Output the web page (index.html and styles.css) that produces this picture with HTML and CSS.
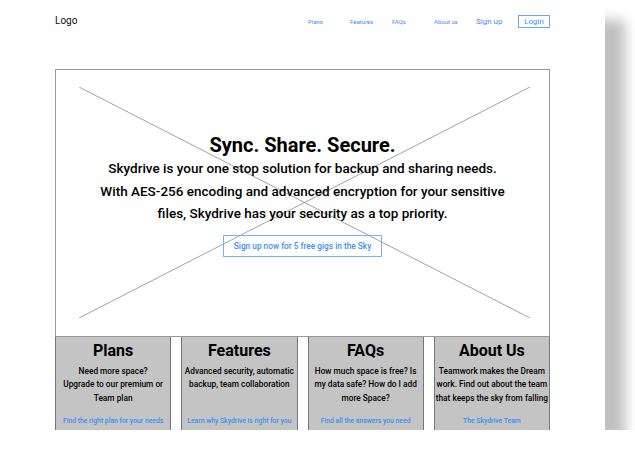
FILE: index.html
```html
<!DOCTYPE html>
<html lang="en">
<head>
<meta charset="utf-8">
<title>Skydrive</title>
<link rel="stylesheet" href="styles.css">
</head>
<body>
<div class="page">
  <header class="topbar">
    <div class="logo">Logo</div>
    <nav class="nav">
      <a class="nav-link">Plans</a>
      <a class="nav-link">Features</a>
      <a class="nav-link">FAQs</a>
      <a class="nav-link">About us</a>
      <a class="nav-signup">Sign up</a>
      <a class="nav-login">Login</a>
    </nav>
  </header>
  <main class="content">
    <section class="hero">
      <svg class="hero-x" preserveAspectRatio="none">
        <line x1="0" y1="0" x2="100%" y2="100%"></line>
        <line x1="100%" y1="0" x2="0" y2="100%"></line>
      </svg>
      <h1 class="hero-title">Sync. Share. Secure.</h1>
      <p class="hero-text">Skydrive is your one stop solution for backup and sharing needs. With AES-256 encoding and advanced encryption for your sensitive files, Skydrive has your security as a top priority.</p>
      <a class="cta">Sign up now for 5 free gigs in the Sky</a>
    </section>
    <section class="cards">
      <div class="card">
        <h2 class="card-title">Plans</h2>
        <p class="card-text">Need more space?<br>Upgrade to our premium or Team plan</p>
        <a class="card-link">Find the right plan for your needs</a>
      </div>
      <div class="card">
        <h2 class="card-title">Features</h2>
        <p class="card-text">Advanced security, automatic backup, team collaboration</p>
        <a class="card-link">Learn why Skydrive is right for you</a>
      </div>
      <div class="card">
        <h2 class="card-title">FAQs</h2>
        <p class="card-text">How much space is free? Is my data safe? How do I add more Space?</p>
        <a class="card-link">Find all the answers you need</a>
      </div>
      <div class="card">
        <h2 class="card-title">About Us</h2>
        <p class="card-text">Teamwork makes the Dream work. Find out about the team that keeps the sky from falling</p>
        <a class="card-link">The Skydrive Team</a>
      </div>
    </section>
  </main>
</div>
</body>
</html>
```
FILE: styles.css
```css
* { box-sizing: border-box; }

body {
  margin: 0;
  background: #fff;
  font-family: Roboto, "Liberation Sans", sans-serif;
  color: #000;
}

.page {
  width: 605px;
  height: 430px;
  overflow: hidden;
  background: #fff;
  box-shadow: 20px 20px 12px rgba(0, 0, 0, 0.25);
}

.topbar {
  display: flex;
  justify-content: space-between;
  align-items: baseline;
  padding: 15px 55px 0 55px;
}

.logo {
  font-size: 10px;
  line-height: 12px;
  color: #111;
}

.nav {
  display: grid;
  grid-template-columns: repeat(6, 32px);
  column-gap: 10px;
  align-items: baseline;
}

.nav-link {
  font-size: 6px;
  color: #3f8ef0;
  white-space: nowrap;
}

.nav-signup {
  font-size: 8px;
  color: #3f8ef0;
  white-space: nowrap;
}

.nav-login {
  height: 13px;
  border: 1px solid #6aa7f2;
  font-size: 8px;
  line-height: 11px;
  text-align: center;
  color: #3f8ef0;
}

.content {
  padding: 0 55px;
  margin-top: 41px;
}

.hero {
  position: relative;
  isolation: isolate;
  height: 268px;
  border: 1px solid #999;
  display: flex;
  flex-direction: column;
  align-items: center;
  padding-top: 63px;
}

.hero-x {
  position: absolute;
  top: 17px;
  left: 23px;
  width: 451px;
  height: 231px;
  z-index: -1;
}

.hero-x line {
  stroke: #8a8a8a;
  stroke-width: 0.8;
}

.hero-title {
  margin: 0;
  font-size: 20px;
  line-height: 24px;
  font-weight: 700;
}

.hero-text {
  margin: 0;
  max-width: 412px;
  font-size: 13.5px;
  line-height: 22.5px;
  font-weight: 500;
  text-align: center;
}

.cta {
  margin-top: 10px;
  height: 22px;
  padding: 0 10px;
  border: 1px solid #7fb2f3;
  font-size: 8.3px;
  line-height: 20px;
  font-weight: 500;
  color: #3f8ef0;
}

.cards {
  display: grid;
  grid-template-columns: repeat(4, 1fr);
  column-gap: 10px;
  margin-top: -1px;
}

.card {
  height: 110px;
  background: #c4c4c4;
  border: 1px solid #777;
  padding: 4px 0 0;
  text-align: center;
}

.card-title {
  margin: 0;
  font-size: 16px;
  line-height: 19px;
  font-weight: 700;
}

.card-text {
  margin: 4.5px 0 0;
  height: 40.5px;
  font-size: 8.3px;
  line-height: 13.5px;
  font-weight: 500;
}

.card-link {
  display: block;
  margin-top: 11px;
  font-size: 6.8px;
  line-height: 10px;
  font-weight: 500;
  color: #3f8ef0;
}
```
